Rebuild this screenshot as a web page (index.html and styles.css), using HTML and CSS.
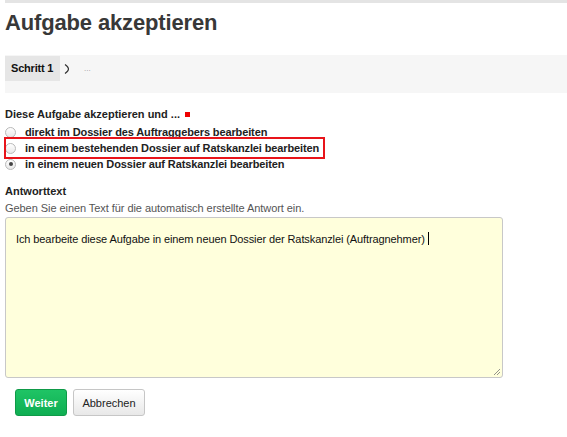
FILE: index.html
```html
<!DOCTYPE html>
<html lang="de">
<head>
<meta charset="utf-8">
<link rel="stylesheet" href="styles.css">
</head>
<body>
<div class="page">
  <div class="topbar"></div>
  <h1 class="title">Aufgabe akzeptieren</h1>
  <div class="steps">
    <span class="step active">Schritt 1</span>
    <svg class="chev" width="6" height="10" viewBox="0 0 6 10"><path d="M1 0.5 Q4.5 3 4.5 5 Q4.5 7 1 9.5" fill="none" stroke="#333" stroke-width="1.1"/></svg>
    <span class="step more">...</span>
  </div>
  <form class="form">
    <div class="field">
      <div class="label">Diese Aufgabe akzeptieren und ... <span class="req"></span></div>
      <label class="opt"><span class="radio"></span>direkt im Dossier des Auftraggebers bearbeiten</label>
      <label class="opt marked"><span class="radio"></span>in einem bestehenden Dossier auf Ratskanzlei bearbeiten</label>
      <label class="opt"><span class="radio checked"></span>in einem neuen Dossier auf Ratskanzlei bearbeiten</label>
    </div>
    <div class="field">
      <div class="label">Antworttext</div>
      <div class="help">Geben Sie einen Text für die automatisch erstellte Antwort ein.</div>
      <div class="textarea">Ich bearbeite diese Aufgabe in einem neuen Dossier der Ratskanzlei (Auftragnehmer)<span class="caret"></span>
        <svg class="grip" width="8" height="8" viewBox="0 0 8 8"><path d="M7 1 L1 7 M7 4 L4 7" stroke="#777" stroke-width="0.8"/></svg>
      </div>
    </div>
    <div class="buttons">
      <span class="btn primary">Weiter</span>
      <span class="btn">Abbrechen</span>
    </div>
  </form>
</div>
</body>
</html>
```
FILE: styles.css
```css
html, body {
  margin: 0;
  padding: 0;
  background: #fff;
}
body {
  font-family: "Liberation Sans", Arial, Helvetica, sans-serif;
  font-size: 11px;
  color: #333;
}
.page {
  padding-left: 5px;
}
.topbar {
  height: 3px;
  background: #e4e4e4;
}
.title {
  margin: 0;
  padding-top: 7px;
  height: 45px;
  font-size: 22px;
  line-height: 26px;
  font-weight: bold;
  color: #383838;
  letter-spacing: -0.15px;
}
.steps {
  display: flex;
  align-items: flex-start;
  height: 38px;
  background: #f6f6f6;
}
.step {
  display: block;
  white-space: nowrap;
}
.step.active {
  margin-top: 1px;
  height: 25px;
  line-height: 25px;
  width: 55px;
  box-sizing: border-box;
  padding-left: 6px;
  background: #e6e6e6;
  font-weight: bold;
  color: #111;
  letter-spacing: -0.2px;
}
.chev {
  margin: 9px 0 0 4px;
}
.step.more {
  margin: 8px 0 0 14px;
  font-size: 8px;
  line-height: 12px;
  color: #999;
}
.form {
  margin: 0;
  padding-top: 14px;
}
.field {
  margin-bottom: 12px;
}
.label {
  font-weight: bold;
  color: #222;
  line-height: 14px;
  margin-bottom: 3px;
  white-space: nowrap;
}
.req {
  display: inline-block;
  width: 5px;
  height: 5px;
  background: #e00;
  margin-left: 2px;
  vertical-align: 1px;
}
.opt {
  display: flex;
  align-items: center;
  height: 16px;
  font-weight: bold;
  color: #222;
  white-space: nowrap;
  letter-spacing: -0.12px;
  position: relative;
}
.opt.marked::after {
  content: "";
  position: absolute;
  left: -1px;
  width: 321px;
  top: -3px;
  bottom: -3px;
  box-sizing: border-box;
  border: 2px solid #e8141a;
}
.radio {
  width: 9px;
  height: 9px;
  border-radius: 50%;
  border: 1px solid #b9b9b9;
  background: linear-gradient(#ffffff, #e8e8e8);
  margin-right: 9px;
  flex: none;
  box-sizing: content-box;
  position: relative;
}
.radio.checked::after {
  content: "";
  position: absolute;
  left: 2.5px;
  top: 2.5px;
  width: 4px;
  height: 4px;
  border-radius: 50%;
  background: #444;
}
.help {
  color: #555;
  line-height: 14px;
  margin-bottom: 2px;
  white-space: nowrap;
  letter-spacing: -0.06px;
}
.textarea {
  position: relative;
  box-sizing: border-box;
  width: 498px;
  height: 161px;
  border: 1px solid #c8c8c8;
  border-radius: 3px;
  background: #ffffdc;
  padding: 14px 10px;
  color: #111;
  line-height: 14px;
  white-space: nowrap;
  letter-spacing: -0.1px;
}
.caret {
  display: inline-block;
  width: 1px;
  height: 13px;
  background: #000;
  margin-left: 3px;
  vertical-align: -2px;
}
.grip {
  position: absolute;
  right: 1px;
  bottom: 1px;
}
.buttons {
  display: flex;
  gap: 6px;
  padding-left: 10px;
  margin-top: -1px;
}
.btn {
  display: flex;
  align-items: center;
  justify-content: center;
  box-sizing: border-box;
  height: 27px;
  border-radius: 3px;
  border: 1px solid #c6c6c6;
  background: linear-gradient(#ffffff, #e8e8e8);
  color: #222;
  width: 72px;
}
.btn.primary {
  width: 52px;
  border-color: #0f9a48;
  background: linear-gradient(#1fc465, #0fae52);
  color: #fff;
  font-weight: bold;
}
```
